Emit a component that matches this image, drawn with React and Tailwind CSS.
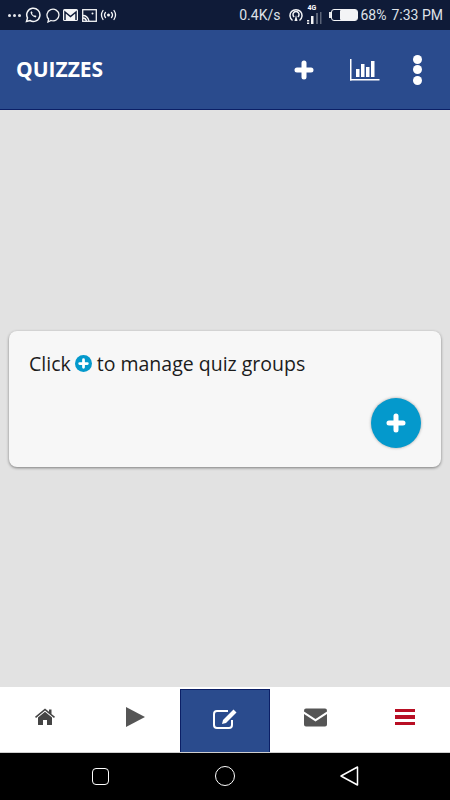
const statusFont = 'font-["Roboto",sans-serif]'

function StatusLeft() {
  return (
    <div className="flex items-center">
      <div className="flex gap-[2px] ml-2 mr-[4px]">
        <span className="w-[3px] h-[3px] rounded-full bg-[#e5e7eb]" />
        <span className="w-[3px] h-[3px] rounded-full bg-[#e5e7eb]" />
        <span className="w-[3px] h-[3px] rounded-full bg-[#e5e7eb]" />
      </div>
      {/* whatsapp */}
      <svg width="16" height="16" viewBox="0 0 16 16" fill="none" stroke="#f3f4f6" strokeWidth="1.5">
        <path d="M1.5 14.5l1-3.6A6.6 6.6 0 1 1 5 13.5z" />
        <path d="M5.5 5c.2 2.8 2.4 5 5.2 5.4l.8-1.3-1.7-.9-.7.6C8 8.300 7.500 7.600 7 6.600l.6-.7-.8-1.700z" fill="#f3f4f6" stroke="none" />
      </svg>
      {/* message */}
      <svg width="15" height="15" viewBox="0 0 15 15" fill="none" stroke="#f3f4f6" strokeWidth="1.3" className="ml-[4px]">
        <path d="M3 14l.6-3A6 5.800 0 1 1 6 12.500z" />
      </svg>
      {/* gmail */}
      <svg width="15" height="12" viewBox="0 0 15 12" className="ml-[3px]">
        <rect width="15" height="12" rx="1.5" fill="#f3f4f6" />
        <path d="M2 11V3l5.500 4.500L13 3v8" fill="none" stroke="#0f1b38" strokeWidth="1.500" />
      </svg>
      {/* gallery box */}
      <svg width="15" height="13" viewBox="0 0 15 13" fill="none" stroke="#f3f4f6" strokeWidth="1.3" className="ml-[4px]">
        <rect x="0.700" y="0.700" width="13.600" height="11.600" />
        <path d="M1 6.500c3 0 5 2 6 5.500M1 9c1.500 0 3 1 3.500 3" />
        <circle cx="10.500" cy="4.500" r="1" fill="#f3f4f6" stroke="none" />
      </svg>
      {/* hotspot */}
      <svg width="17" height="12" viewBox="0 0 17 12" fill="none" stroke="#f3f4f6" strokeWidth="1.300" strokeLinecap="round" className="ml-[3px]">
        <circle cx="8.500" cy="6" r="1.500" fill="#f3f4f6" stroke="none" />
        <path d="M5.500 3.500a4 4 0 0 0 0 5M11.500 3.500a4 4 0 0 1 0 5M3 1.500a8 8 0 0 0 0 9M14 1.500a8 8 0 0 1 0 9" />
      </svg>
    </div>
  )
}

function StatusRight() {
  return (
    <div className={`flex items-center text-[14px] text-[#dfe2e8] ${statusFont}`}>
      <span>0.4K/s</span>
      <svg width="14" height="14" viewBox="0 0 14 14" fill="none" stroke="#f3f4f6" strokeWidth="1.500" className="ml-[9px]">
        <path d="M3.500 12.500a6 6 0 1 1 7 0" />
        <path d="M5.200 9a3 3 0 1 1 3.600 0" />
        <path d="M7 7l-1.500 6h3z" fill="#f3f4f6" stroke="none" />
      </svg>
      <div className="ml-[4px] w-[15px] h-[20px] flex flex-col">
        <span className="text-[7px] leading-[7px] font-bold text-white">4G</span>
        <svg width="15" height="13" viewBox="0 0 15 13">
          <rect x="0" y="8" width="2.200" height="1.500" fill="#f3f4f6" />
          <rect x="0" y="10.500" width="2.200" height="1.500" fill="#f3f4f6" />
          <rect x="4" y="4" width="2.500" height="8" fill="#f3f4f6" />
          <rect x="9" y="1" width="2" height="11" fill="#5b6478" />
          <rect x="13" y="0" width="1.500" height="12" fill="#5b6478" />
        </svg>
      </div>
      <div className="ml-[7px] flex items-center">
        <span className="w-[2px] h-[6px] bg-[#e5e7eb]" />
        <div className="w-[27px] h-[12px] rounded-[3px] border border-[#f3f4f6] flex justify-end">
          <span className="w-[17px] h-full bg-[#f3f4f6] rounded-[1px]" />
        </div>
      </div>
      <span className="ml-[2px]">68%</span>
      <span className="ml-[5px]">7:33 PM</span>
    </div>
  )
}

function Plus({ className }) {
  return (
    <svg viewBox="0 0 20 20" className={className} fill="none" stroke="currentColor" strokeWidth="5" strokeLinecap="round">
      <path d="M10 3v14M3 10h14" />
    </svg>
  )
}

function Header() {
  return (
    <div className="h-20 shrink-0 bg-[#2a4b8d] border-b border-[#0b1f66] flex items-center pl-4 pr-[28px]">
      <h1 className='text-[21px] font-bold text-white font-["Open_Sans",sans-serif]'>QUIZZES</h1>
      <div className="flex-1" />
      <Plus className="w-5 h-5 text-white mr-[36px]" />
      <svg width="30" height="22" viewBox="0 0 30 22" className="mr-[33px]" fill="#fff">
        <rect x="0" y="0" width="1.500" height="21.500" />
        <rect x="0" y="20" width="29.500" height="1.500" />
        <rect x="6" y="10" width="3.500" height="8" />
        <rect x="11" y="5" width="3.500" height="13" />
        <rect x="16" y="8" width="3.500" height="10" />
        <rect x="21" y="2" width="3.500" height="16" />
      </svg>
      <div className="flex flex-col gap-[1.500px]">
        <span className="w-[9px] h-[9px] rounded-full bg-white" />
        <span className="w-[9px] h-[9px] rounded-full bg-white" />
        <span className="w-[9px] h-[9px] rounded-full bg-white" />
      </div>
    </div>
  )
}

function Card() {
  return (
    <div className="bg-[#f7f7f7] mx-[9px] h-[136px] rounded-lg shadow-[0_1px_3px_rgba(0,0,0,0.45)] flex flex-col px-5 pt-[19px] pb-[19px]">
      <div className='flex items-center text-[19.5px] leading-[27px] text-[#1c1c1c] font-["Open_Sans",sans-serif]'>
        <span>Click</span>
        <span className="ml-[4px] mr-[5px] w-[17px] h-[17px] rounded-full bg-[#0499cc] flex items-center justify-center">
          <Plus className="w-[11px] h-[11px] text-white" />
        </span>
        <span>to manage quiz groups</span>
      </div>
      <div className="flex-1" />
      <div className="self-end w-[50px] h-[50px] rounded-full bg-[#0499cc] shadow-[0_0_3px_rgba(0,0,0,0.35)] flex items-center justify-center">
        <Plus className="w-5 h-5 text-white" />
      </div>
    </div>
  )
}

function BottomNav() {
  return (
    <div className="h-[66px] shrink-0 bg-white border-b border-[#cfcfcf] grid grid-cols-5">
      <div className="flex items-center justify-center pb-[5px]">
        <svg width="20" height="18" viewBox="0 0 20 17" fill="#444">
          <path d="M10 3.200 3 9v7a.6.6 0 0 0 .6.6h4.400v-5h4v5h4.400a.6.6 0 0 0 .6-.6V9z" />
          <path d="M10 0 0 8.300l1 1.200L10 2l9 7.500 1-1.200-3.500-2.900V1h-2.500v2.200z" />
        </svg>
      </div>
      <div className="flex items-center justify-center pb-[5px]">
        <svg width="19" height="20" viewBox="0 0 19 20" fill="#555">
          <path d="M0 0l19 10L0 20z" />
        </svg>
      </div>
      <div className="mt-[2px] bg-[#2a4b8d] border border-b-0 border-[#0b1f66] flex items-center justify-center pb-[5px]">
        <svg width="24" height="20" viewBox="0 0 24 20" fill="none" stroke="#fff" strokeWidth="2">
          <path d="M19 11v5a3 3 0 0 1-3 3H4a3 3 0 0 1-3-3V5a3 3 0 0 1 3-3h11" />
          <path d="M20.500 0.500 23.500 3.500 13 14l-4 1 1-4z" fill="#fff" stroke="none" />
        </svg>
      </div>
      <div className="flex items-center justify-center pb-[5px]">
        <svg width="23" height="19" viewBox="0 0 23 18">
          <path d="M2 0h19a2 2 0 0 1 2 2v1l-11.500 7.500L0 3V2a2 2 0 0 1 2-2z" fill="#555" />
          <path d="M0 5.500l11.500 7.500L23 5.500V16a2 2 0 0 1-2 2H2a2 2 0 0 1-2-2z" fill="#555" />
        </svg>
      </div>
      <div className="flex items-center justify-center pb-[5px]">
        <div className="flex flex-col gap-[3px]">
          <span className="w-5 h-[3.500px] bg-[#b80f24]" />
          <span className="w-5 h-[3.500px] bg-[#b80f24]" />
          <span className="w-5 h-[3.500px] bg-[#b80f24]" />
        </div>
      </div>
    </div>
  )
}

function SystemNav() {
  return (
    <div className="h-[47px] shrink-0 bg-black flex items-center justify-between pl-[92px] pr-[91px] pb-[1px]">
      <span className="w-[17px] h-[17px] rounded-[4px] border-[1.500px] border-white" />
      <span className="w-5 h-5 rounded-full border-[1.500px] border-white" />
      <svg width="19" height="20" viewBox="0 0 19 20" fill="none" stroke="#fff" strokeWidth="1.500" strokeLinejoin="round">
        <path d="M1 10 17.500 1v18z" />
      </svg>
    </div>
  )
}

export default function App() {
  return (
    <div className="w-[450px] h-[800px] flex flex-col overflow-hidden bg-[#e2e2e2]">
      <div className="h-[30px] shrink-0 bg-[#0f1b38] flex items-center justify-between pr-[7px]">
        <StatusLeft />
        <StatusRight />
      </div>
      <Header />
      <div className="flex-1 flex flex-col justify-center pt-[1px]">
        <Card />
      </div>
      <BottomNav />
      <SystemNav />
    </div>
  )
}
